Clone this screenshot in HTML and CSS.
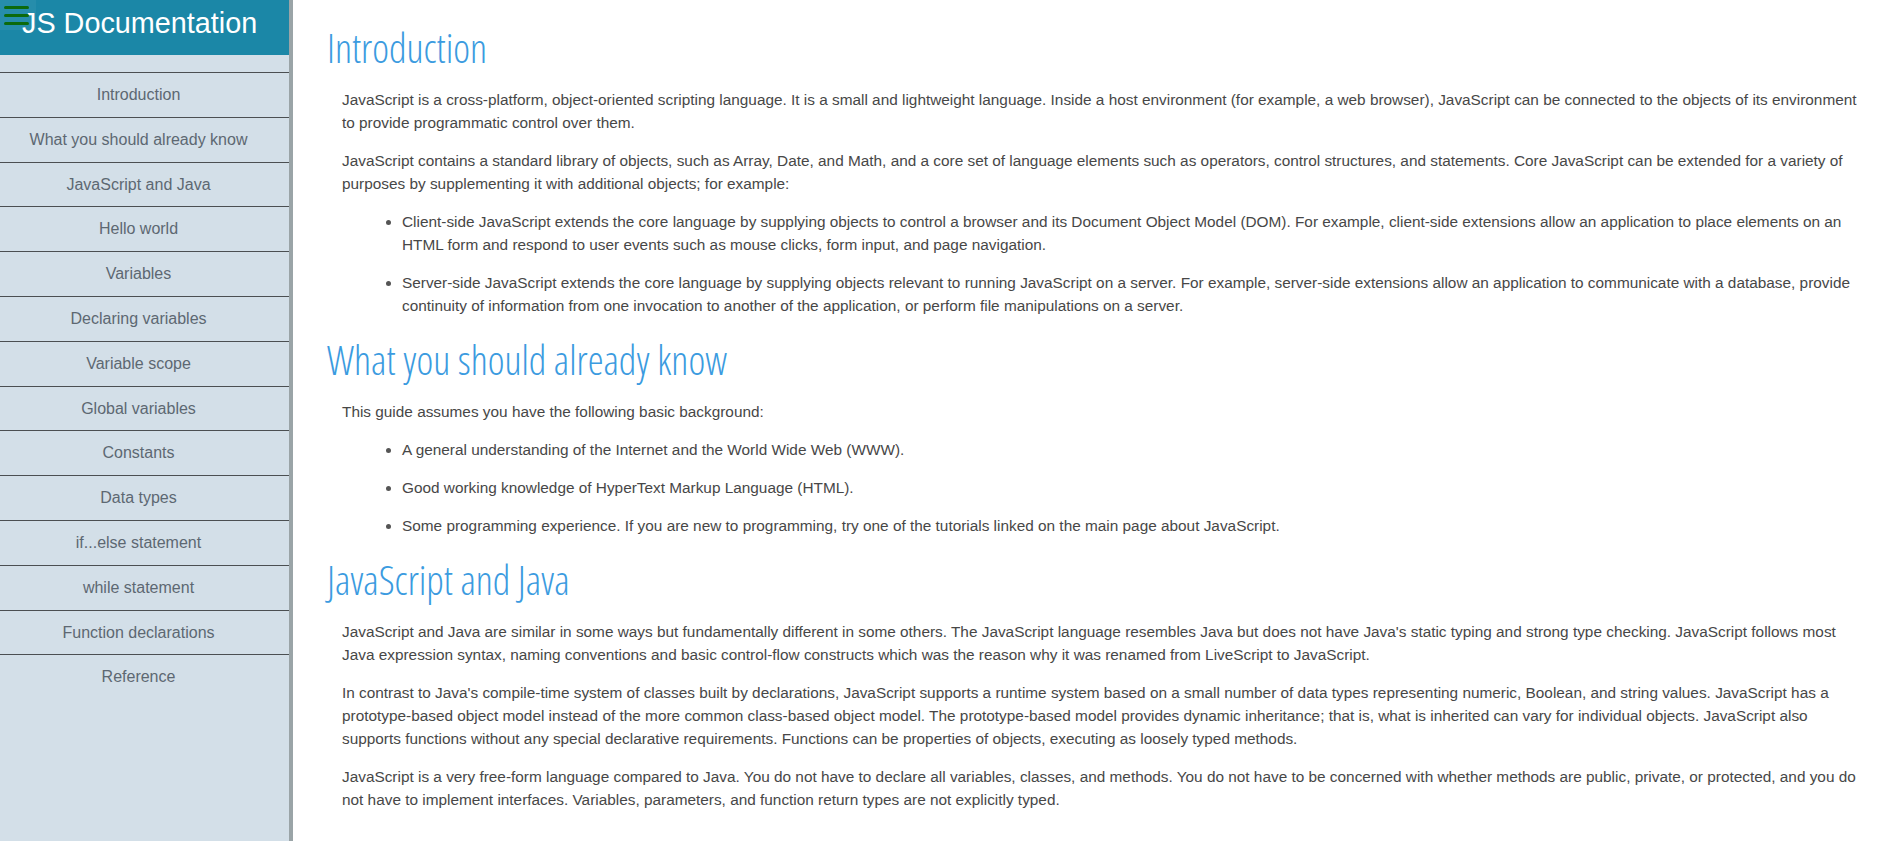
FILE: index.html
```html
<!DOCTYPE html>
<html lang="en">
<head>
<meta charset="utf-8">
<title>JS Documentation</title>
<link rel="stylesheet" href="styles.css">
</head>
<body>
<div class="page">
  <nav id="navbar" class="navbar">
    <button class="menu-btn" aria-label="Menu">
      <span class="bar"></span>
      <span class="bar"></span>
      <span class="bar"></span>
    </button>
    <header class="nav-header">
      <h1 class="nav-title">JS Documentation</h1>
    </header>
    <ul class="nav-list">
      <li><a class="nav-link" href="#Introduction">Introduction</a></li>
      <li><a class="nav-link" href="#What_you_should_already_know">What you should already know</a></li>
      <li><a class="nav-link" href="#JavaScript_and_Java">JavaScript and Java</a></li>
      <li><a class="nav-link" href="#Hello_world">Hello world</a></li>
      <li><a class="nav-link" href="#Variables">Variables</a></li>
      <li><a class="nav-link" href="#Declaring_variables">Declaring variables</a></li>
      <li><a class="nav-link" href="#Variable_scope">Variable scope</a></li>
      <li><a class="nav-link" href="#Global_variables">Global variables</a></li>
      <li><a class="nav-link" href="#Constants">Constants</a></li>
      <li><a class="nav-link" href="#Data_types">Data types</a></li>
      <li><a class="nav-link" href="#if...else_statement">if...else statement</a></li>
      <li><a class="nav-link" href="#while_statement">while statement</a></li>
      <li><a class="nav-link" href="#Function_declarations">Function declarations</a></li>
      <li><a class="nav-link" href="#Reference">Reference</a></li>
    </ul>
  </nav>

  <main id="main-doc" class="main-doc">
    <section class="main-section" id="Introduction">
      <header class="section-title">Introduction</header>
      <p>JavaScript is a cross-platform, object-oriented scripting language. It is a small and lightweight language. Inside a host environment (for example, a web browser), JavaScript can be connected to the objects of its environment to provide programmatic control over them.</p>
      <p>JavaScript contains a standard library of objects, such as Array, Date, and Math, and a core set of language elements such as operators, control structures, and statements. Core JavaScript can be extended for a variety of purposes by supplementing it with additional objects; for example:</p>
      <ul class="doc-list">
        <li>Client-side JavaScript extends the core language by supplying objects to control a browser and its Document Object Model (DOM). For example, client-side extensions allow an application to place elements on an HTML form and respond to user events such as mouse clicks, form input, and page navigation.</li>
        <li>Server-side JavaScript extends the core language by supplying objects relevant to running JavaScript on a server. For example, server-side extensions allow an application to communicate with a database, provide continuity of information from one invocation to another of the application, or perform file manipulations on a server.</li>
      </ul>
    </section>

    <section class="main-section" id="What_you_should_already_know">
      <header class="section-title">What you should already know</header>
      <p>This guide assumes you have the following basic background:</p>
      <ul class="doc-list">
        <li>A general understanding of the Internet and the World Wide Web (WWW).</li>
        <li>Good working knowledge of HyperText Markup Language (HTML).</li>
        <li>Some programming experience. If you are new to programming, try one of the tutorials linked on the main page about JavaScript.</li>
      </ul>
    </section>

    <section class="main-section" id="JavaScript_and_Java">
      <header class="section-title">JavaScript and Java</header>
      <p>JavaScript and Java are similar in some ways but fundamentally different in some others. The JavaScript language resembles Java but does not have Java's static typing and strong type checking. JavaScript follows most Java expression syntax, naming conventions and basic control-flow constructs which was the reason why it was renamed from LiveScript to JavaScript.</p>
      <p>In contrast to Java's compile-time system of classes built by declarations, JavaScript supports a runtime system based on a small number of data types representing numeric, Boolean, and string values. JavaScript has a prototype-based object model instead of the more common class-based object model. The prototype-based model provides dynamic inheritance; that is, what is inherited can vary for individual objects. JavaScript also supports functions without any special declarative requirements. Functions can be properties of objects, executing as loosely typed methods.</p>
      <p>JavaScript is a very free-form language compared to Java. You do not have to declare all variables, classes, and methods. You do not have to be concerned with whether methods are public, private, or protected, and you do not have to implement interfaces. Variables, parameters, and function return types are not explicitly typed.</p>
    </section>
  </main>
</div>
</body>
</html>
```

FILE: styles.css
```css
* {
  box-sizing: border-box;
}

html, body {
  margin: 0;
  padding: 0;
  height: 100%;
  overflow: hidden;
}

body {
  font-family: "Liberation Sans", Arial, sans-serif;
  background: #ffffff;
}

.page {
  display: flex;
  height: 100vh;
}

/* ---------- sidebar ---------- */
.navbar {
  position: relative;
  flex: 0 0 293px;
  width: 293px;
  height: 100vh;
  background: #d3dfe8;
  border-right: 4px solid #9aa4a7;
  display: flex;
  flex-direction: column;
}

.nav-header {
  height: 55px;
  background: #1b87a7;
  margin-bottom: 17px;
  padding: 7px 0 0 22px;
}

.nav-title {
  margin: 0;
  font-family: "Liberation Sans", Arial, sans-serif;
  font-weight: 400;
  font-size: 28.8px;
  line-height: 33px;
  color: #ffffff;
  white-space: nowrap;
}

.menu-btn {
  position: absolute;
  top: 0;
  left: 0;
  width: 36px;
  height: 30px;
  padding: 6px 0 0 4px;
  margin: 0;
  border: none;
  background: rgba(255, 255, 255, 0.05);
  display: flex;
  flex-direction: column;
  gap: 5px;
  z-index: 2;
  cursor: pointer;
}

.bar {
  display: block;
  width: 25px;
  height: 3px;
  border-radius: 2px;
  background: #0c6a0c;
}

.nav-list {
  list-style: none;
  margin: 0;
  padding: 0;
}

.nav-list li {
  border-top: 1px solid #4b4f52;
}

.nav-link {
  display: block;
  height: 43.8px;
  line-height: 43.8px;
  padding-right: 12px;
  text-align: center;
  font-size: 16px;
  color: #5d6872;
  text-decoration: none;
}

/* ---------- main ---------- */
.main-doc {
  flex: 1;
  padding: 20px 13px 0 34px;
  overflow: hidden;
}

.main-section {
  padding-top: 8px;
}

.section-title {
  font-family: "Open Sans", "DejaVu Sans Condensed", sans-serif;
  font-stretch: 75%;
  font-weight: 300;
  font-size: 40px;
  line-height: 40px;
  color: #3b9be0;
  margin: 0 0 20px;
  white-space: nowrap;
}

.main-section p {
  margin: 0 16px 15px 15px;
  font-size: 15.36px;
  line-height: 23px;
  color: #474747;
}

.doc-list {
  margin: 0 16px 0 15px;
  padding-left: 60px;
  list-style: disc;
}

.doc-list li {
  font-size: 15.36px;
  line-height: 23px;
  color: #474747;
  margin-bottom: 15px;
}

.doc-list li::marker {
  color: #555555;
}
```
